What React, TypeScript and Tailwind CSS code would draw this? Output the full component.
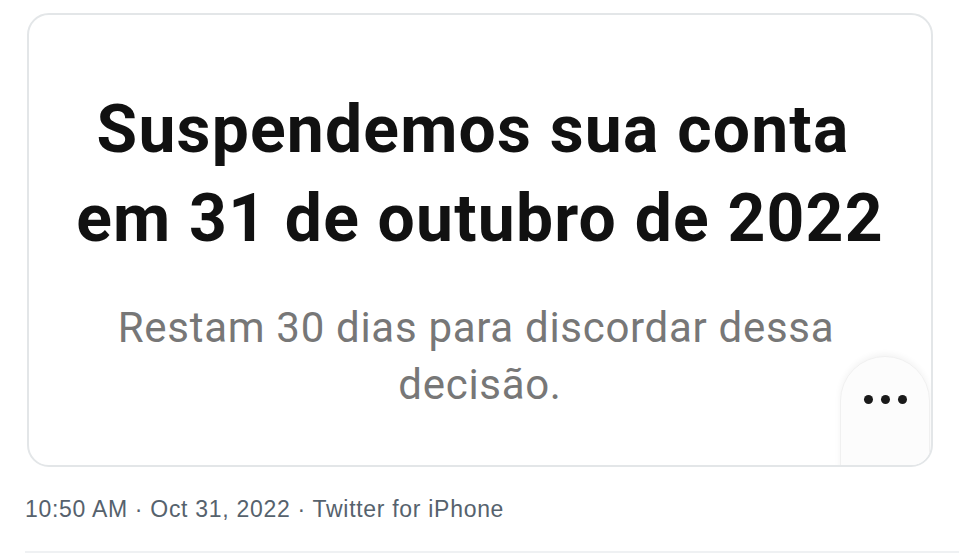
import React from 'react';

export default function App() {
  return (
    <div className="w-[959px] h-[555px] bg-white overflow-hidden relative">
      {/* Card */}
      <div className="absolute left-[27px] top-[13px] w-[906px] h-[454px] rounded-[22px] border-2 border-[#e3e6e8] overflow-hidden">
        <div className="flex flex-col items-center pt-[70px]" style={{ fontFamily: 'Roboto, sans-serif' }}>
          <h1 className="text-[66px] leading-[89px] font-bold text-[#111] text-center tracking-[1.2px]">
            <span className="block pr-[14px]">Suspendemos sua conta</span>
            <span className="block">em 31 de outubro de 2022</span>
          </h1>
          <p className="mt-[36px] text-[42px] leading-[57px] text-[#777] text-center tracking-[0.7px]">
            <span className="block pr-[8px]">Restam 30 dias para discordar dessa</span>
            <span className="block">decisão.</span>
          </p>
        </div>

        {/* More bubble */}
        <div className="absolute left-[811px] top-[341px] w-[90px] h-[130px] rounded-t-full bg-[#fcfcfc] shadow-[0_-2px_6px_rgba(0,0,0,0.05)] border border-[#f0f0f0] flex justify-center pt-[38px]">
          <div className="flex gap-[8px]">
            <span className="w-[9px] h-[9px] rounded-full bg-[#1a1a1a]" />
            <span className="w-[9px] h-[9px] rounded-full bg-[#1a1a1a]" />
            <span className="w-[9px] h-[9px] rounded-full bg-[#1a1a1a]" />
          </div>
        </div>
      </div>

      {/* Footer */}
      <div className="absolute left-[25px] top-[495px] right-0" style={{ fontFamily: '"Liberation Sans", Arial, sans-serif' }}>
        <p className="text-[23px] leading-[28px] text-[#56626d] tracking-[0.7px]">
          10:50 AM · Oct 31, 2022 · Twitter for iPhone
        </p>
        <div className="mt-[28px] h-[2px] bg-[#eff1f3]" />
      </div>
    </div>
  );
}
